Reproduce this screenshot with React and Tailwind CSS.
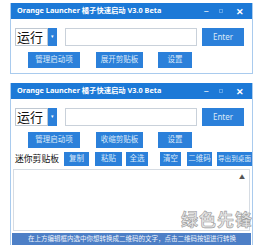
import React from "react";

const FONT = { fontFamily: '"Noto Sans", "Noto Sans CJK SC", sans-serif' };

function TitleBar() {
  return (
    <div className="flex h-[16px] items-center bg-[#1c79d7] pl-[6px] pr-[8px] text-white">
      <span className="flex-1 whitespace-nowrap text-[7.3px] font-bold leading-none">
        Orange Launcher 橘子快速启动 V3.0 Beta
      </span>
      <span className="w-[10px] text-center text-[9px] leading-none">−</span>
      <span className="ml-[8px] h-[4px] w-[4px] border border-[#5da2e6]"></span>
      <span className="ml-[13px] text-[9px] font-bold leading-none">✕</span>
    </div>
  );
}

function InputRow() {
  return (
    <div className="flex h-[18px] items-stretch">
      <div className="flex w-[33px] items-center border border-[#bfc8d2] pl-[1px] text-[13px] leading-none text-[#111]">
        运行
      </div>
      <div className="flex w-[9px] items-center justify-center bg-[#2b80da] text-[5px] text-white">▾</div>
      <div className="ml-[8px] w-[132px] border border-[#c9d1da] bg-white"></div>
      <button className="ml-[5px] w-[42px] bg-[#2b80da] text-[8px] text-[#dbe9f8]">Enter</button>
    </div>
  );
}

function Btn({ w, children, cls = "" }) {
  return (
    <button
      className={`flex h-full shrink-0 items-center justify-center overflow-hidden whitespace-nowrap bg-[#2b80da] leading-none text-[#dbe9f8] ${cls}`}
      style={{ width: w }}
    >
      {children}
    </button>
  );
}

function ActionRow({ middle }) {
  return (
    <div className="mt-[6px] flex h-[16px] pl-[13px]">
      <Btn w={52} cls="text-[7.5px]">管理启动项</Btn>
      <Btn w={47} cls="ml-[16px] text-[7.5px]">{middle}</Btn>
      <Btn w={34} cls="ml-[15px] text-[7.5px]">设置</Btn>
    </div>
  );
}

export default function App() {
  return (
    <div className="min-h-[247px] w-[265px] overflow-hidden bg-white pl-[10px] pt-[3px]" style={FONT}>
      {/* window 1 */}
      <div className="w-[243px] border-x border-b border-[#a9cbee] bg-white">
        <TitleBar />
        <div className="px-[4px] pb-[5px] pt-[9px]">
          <InputRow />
          <ActionRow middle="展开剪贴板" />
        </div>
      </div>

      {/* window 2 */}
      <div className="mt-[9px] w-[243px] border-x border-[#a9cbee] bg-white">
        <TitleBar />
        <div className="px-[4px] pt-[9px]">
          <InputRow />
          <ActionRow middle="收缩剪贴板" />
          <div className="mt-[4px] flex h-[14px] items-center whitespace-nowrap">
            <span className="w-[49px] shrink-0 text-[8.8px] leading-none text-[#111]">迷你剪贴板</span>
            <div className="flex h-full">
              <Btn w={25} cls="text-[7.5px]">复制</Btn>
              <Btn w={27} cls="ml-[6px] text-[7.5px]">粘贴</Btn>
              <Btn w={22} cls="ml-[4px] text-[7.5px]">全选</Btn>
              <Btn w={21} cls="ml-[12px] text-[7.5px]">清空</Btn>
              <Btn w={25} cls="ml-[6px] text-[7.5px]">二维码</Btn>
              <Btn w={35} cls="ml-[5px] text-[6.6px]">导出到桌面</Btn>
            </div>
          </div>
        </div>
        <div className="relative mx-[2px] mt-[3px] h-[62px] border border-[#d6dce3] bg-white">
          <span className="absolute right-[4px] top-[4px] text-[6px] leading-none text-[#555]">▲</span>
          <span
            className="absolute bottom-[2px] right-[-4px] whitespace-nowrap text-[17px] font-bold leading-none tracking-[1px] text-[#e6e6e6]"
            style={{ WebkitTextStroke: "0.6px #9a9a9a" }}
          >
            绿色先锋
          </span>
        </div>
        <div className="mx-[1px] mt-[2px] flex h-[12px] items-center bg-[#4d7fc6] pl-[16px] text-[6.5px] leading-none whitespace-nowrap text-[#eef3fb]">
          在上方编辑框内选中你想转换成二维码的文字，点击二维码按钮进行转换
        </div>
      </div>
    </div>
  );
}
